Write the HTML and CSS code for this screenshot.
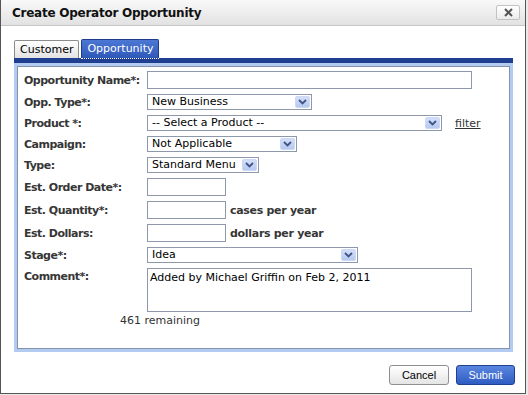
FILE: index.html
```html
<!DOCTYPE html>
<html lang="en">
<head>
    <meta charset="UTF-8">
    <title>Create Operator Opportunity</title>
    <link rel="stylesheet" href="styles.css">
</head>
<body>
    <div class="dialog">
        <div class="titlebar">
            <span class="title">Create Operator Opportunity</span>
            <button type="button" class="close" aria-label="Close">
                <svg width="9" height="9" viewBox="0 0 9 9"><path d="M1 1 L8 8 M8 1 L1 8" stroke="#555" stroke-width="2"/></svg>
            </button>
        </div>

        <div class="dialog-body">
            <div class="tabs">
                <a class="tab" href="#">Customer</a>
                <a class="tab active" href="#">Opportunity</a>
            </div>

            <div class="panel">
                <div class="frame">
                    <div class="panel-inner">
                        <form class="form">
                            <div class="row">
                                <label class="label" for="oppName">Opportunity Name*:</label>
                                <input class="field w-name" id="oppName" type="text">
                            </div>
                            <div class="row">
                                <span class="label">Opp. Type*:</span>
                                <div class="select w-opptype"><span class="select-text">New Business</span><span class="arrow"><svg width="9" height="6" viewBox="0 0 9 6"><path d="M1 1 L4.5 4.5 L8 1" fill="none" stroke="#3f5584" stroke-width="1.8"/></svg></span></div>
                            </div>
                            <div class="row">
                                <span class="label">Product *:</span>
                                <div class="select w-product"><span class="select-text">-- Select a Product --</span><span class="arrow"><svg width="9" height="6" viewBox="0 0 9 6"><path d="M1 1 L4.5 4.5 L8 1" fill="none" stroke="#3f5584" stroke-width="1.8"/></svg></span></div>
                                <a class="filter" href="#">filter</a>
                            </div>
                            <div class="row">
                                <span class="label">Campaign:</span>
                                <div class="select w-campaign"><span class="select-text">Not Applicable</span><span class="arrow"><svg width="9" height="6" viewBox="0 0 9 6"><path d="M1 1 L4.5 4.5 L8 1" fill="none" stroke="#3f5584" stroke-width="1.8"/></svg></span></div>
                            </div>
                            <div class="row">
                                <span class="label">Type:</span>
                                <div class="select w-type"><span class="select-text">Standard Menu</span><span class="arrow"><svg width="9" height="6" viewBox="0 0 9 6"><path d="M1 1 L4.5 4.5 L8 1" fill="none" stroke="#3f5584" stroke-width="1.8"/></svg></span></div>
                            </div>
                            <div class="row">
                                <label class="label" for="orderDate">Est. Order Date*:</label>
                                <input class="field w-small" id="orderDate" type="text">
                            </div>
                            <div class="row">
                                <label class="label" for="quantity">Est. Quantity*:</label>
                                <input class="field w-small" id="quantity" type="text">
                                <span class="suffix">cases per year</span>
                            </div>
                            <div class="row">
                                <label class="label" for="dollars">Est. Dollars:</label>
                                <input class="field w-small" id="dollars" type="text">
                                <span class="suffix">dollars per year</span>
                            </div>
                            <div class="row">
                                <span class="label">Stage*:</span>
                                <div class="select w-stage"><span class="select-text">Idea</span><span class="arrow"><svg width="9" height="6" viewBox="0 0 9 6"><path d="M1 1 L4.5 4.5 L8 1" fill="none" stroke="#3f5584" stroke-width="1.8"/></svg></span></div>
                            </div>
                            <div class="row row-top">
                                <label class="label" for="comment">Comment*:</label>
                                <textarea class="field comment" id="comment">Added by Michael Griffin on Feb 2, 2011</textarea>
                            </div>
                            <div class="remaining">461 remaining</div>
                        </form>
                    </div>
                </div>
            </div>

            <div class="actions">
                <button type="button" class="btn">Cancel</button>
                <button type="button" class="btn primary">Submit</button>
            </div>
        </div>
    </div>
</body>
</html>
```

FILE: styles.css
```css
* {
    margin: 0;
    padding: 0;
    box-sizing: border-box;
}

body {
    background-color: #e9e9e9;
    font-family: "DejaVu Sans", Verdana, sans-serif;
    font-size: 11px;
    color: #000;
}

.dialog {
    width: 526px;
    height: 394px;
    background-color: #fff;
    border: 1px solid #555;
    border-top: none;
    display: flex;
    flex-direction: column;
}

.titlebar {
    height: 26px;
    display: flex;
    align-items: center;
    justify-content: space-between;
    padding: 0 5px 0 11px;
    background: linear-gradient(#f9f9f9, #e2e2e2);
    border-bottom: 1px solid #c6c6c6;
}

.title {
    font-size: 12px;
    font-weight: bold;
    color: #111;
    letter-spacing: -0.25px;
}

.close {
    width: 24px;
    height: 15px;
    display: flex;
    align-items: center;
    justify-content: center;
    border: 1px solid #c2c2c2;
    border-radius: 2px;
    background: linear-gradient(#fff, #ececec);
}

.dialog-body {
    flex: 1;
    display: flex;
    flex-direction: column;
    padding: 13px 12px 0 13px;
}

/* tabs */
.tabs {
    display: flex;
    align-items: flex-end;
    gap: 2px;
    height: 19px;
}

.tab {
    height: 18px;
    padding: 0 5px;
    line-height: 17px;
    color: #000;
    text-decoration: none;
    border: 1px solid #8c8c8c;
    border-bottom: none;
    border-radius: 2px 2px 0 0;
    background: linear-gradient(#fff, #e3e3e3);
}

    .tab.active {
        position: relative;
        height: 19px;
        line-height: 18px;
        color: #fff;
        border-color: #1e3c8a;
        background: linear-gradient(#4c78d4, #2f59b9);
    }

        .tab.active::after {
            content: "";
            position: absolute;
            left: -1px;
            right: -1px;
            bottom: -1px;
            border-bottom: 1px dotted #fff;
        }

/* panel */
.panel {
    border-top: 5px solid #213f90;
}

.frame {
    border: 3px solid #b3cbf1;
}

.panel-inner {
    height: 283px;
    padding: 4px 6px;
    border: 1px solid #8593aa;
}

.form {
    display: flex;
    flex-direction: column;
    gap: 5px;
}

.row {
    display: flex;
    align-items: center;
}

.row-top {
    align-items: flex-start;
}

    .row-top .label {
        padding-top: 2px;
    }

.label {
    width: 123px;
    flex: none;
    font-weight: bold;
    color: #363636;
    letter-spacing: -0.5px;
}

.field {
    height: 18px;
    padding: 0 3px;
    font: inherit;
    color: #000;
    background-color: #fff;
    border: 1px solid #8d99aa;
    outline: none;
}

.w-name { width: 325px; }
.w-small { width: 79px; }
.w-opptype { width: 165px; }
.w-product { width: 295px; }
.w-campaign { width: 150px; }
.w-type { width: 112px; }
.w-stage { width: 211px; }

.select {
    height: 16px;
    display: flex;
    align-items: center;
    padding-left: 4px;
    background-color: #fff;
    border: 1px solid #8d99aa;
}

.select-text {
    flex: 1;
    white-space: nowrap;
    overflow: hidden;
    line-height: 14px;
}

.arrow {
    width: 15px;
    height: 12px;
    margin-right: 1px;
    display: flex;
    align-items: center;
    justify-content: center;
    border: 1px solid #cbd8f4;
    border-radius: 2px;
    background: linear-gradient(#d3defa, #b6c9f1);
}

.filter {
    margin-left: 13px;
    color: #333;
}

.suffix {
    margin-left: 4px;
    font-weight: bold;
    color: #363636;
    letter-spacing: -0.3px;
}

.comment {
    width: 325px;
    height: 44px;
    padding: 2px 2px;
    resize: none;
    line-height: 14px;
}

.remaining {
    margin-top: -3px;
    padding-left: 96px;
    color: #333;
}

/* buttons */
.actions {
    display: flex;
    justify-content: flex-end;
    gap: 7px;
    margin: 13px -2px 0 0;
}

.btn {
    width: 60px;
    height: 20px;
    font-family: "Liberation Sans", Arial, sans-serif;
    font-size: 11px;
    color: #000;
    border: 1px solid #8f8f8f;
    border-radius: 3px;
    background: linear-gradient(#fff, #e4e4e4);
}

    .btn.primary {
        width: 59px;
        color: #fff;
        border-color: #1f3f8f;
        background: linear-gradient(#5a86e0, #2e5cc2);
    }
```
